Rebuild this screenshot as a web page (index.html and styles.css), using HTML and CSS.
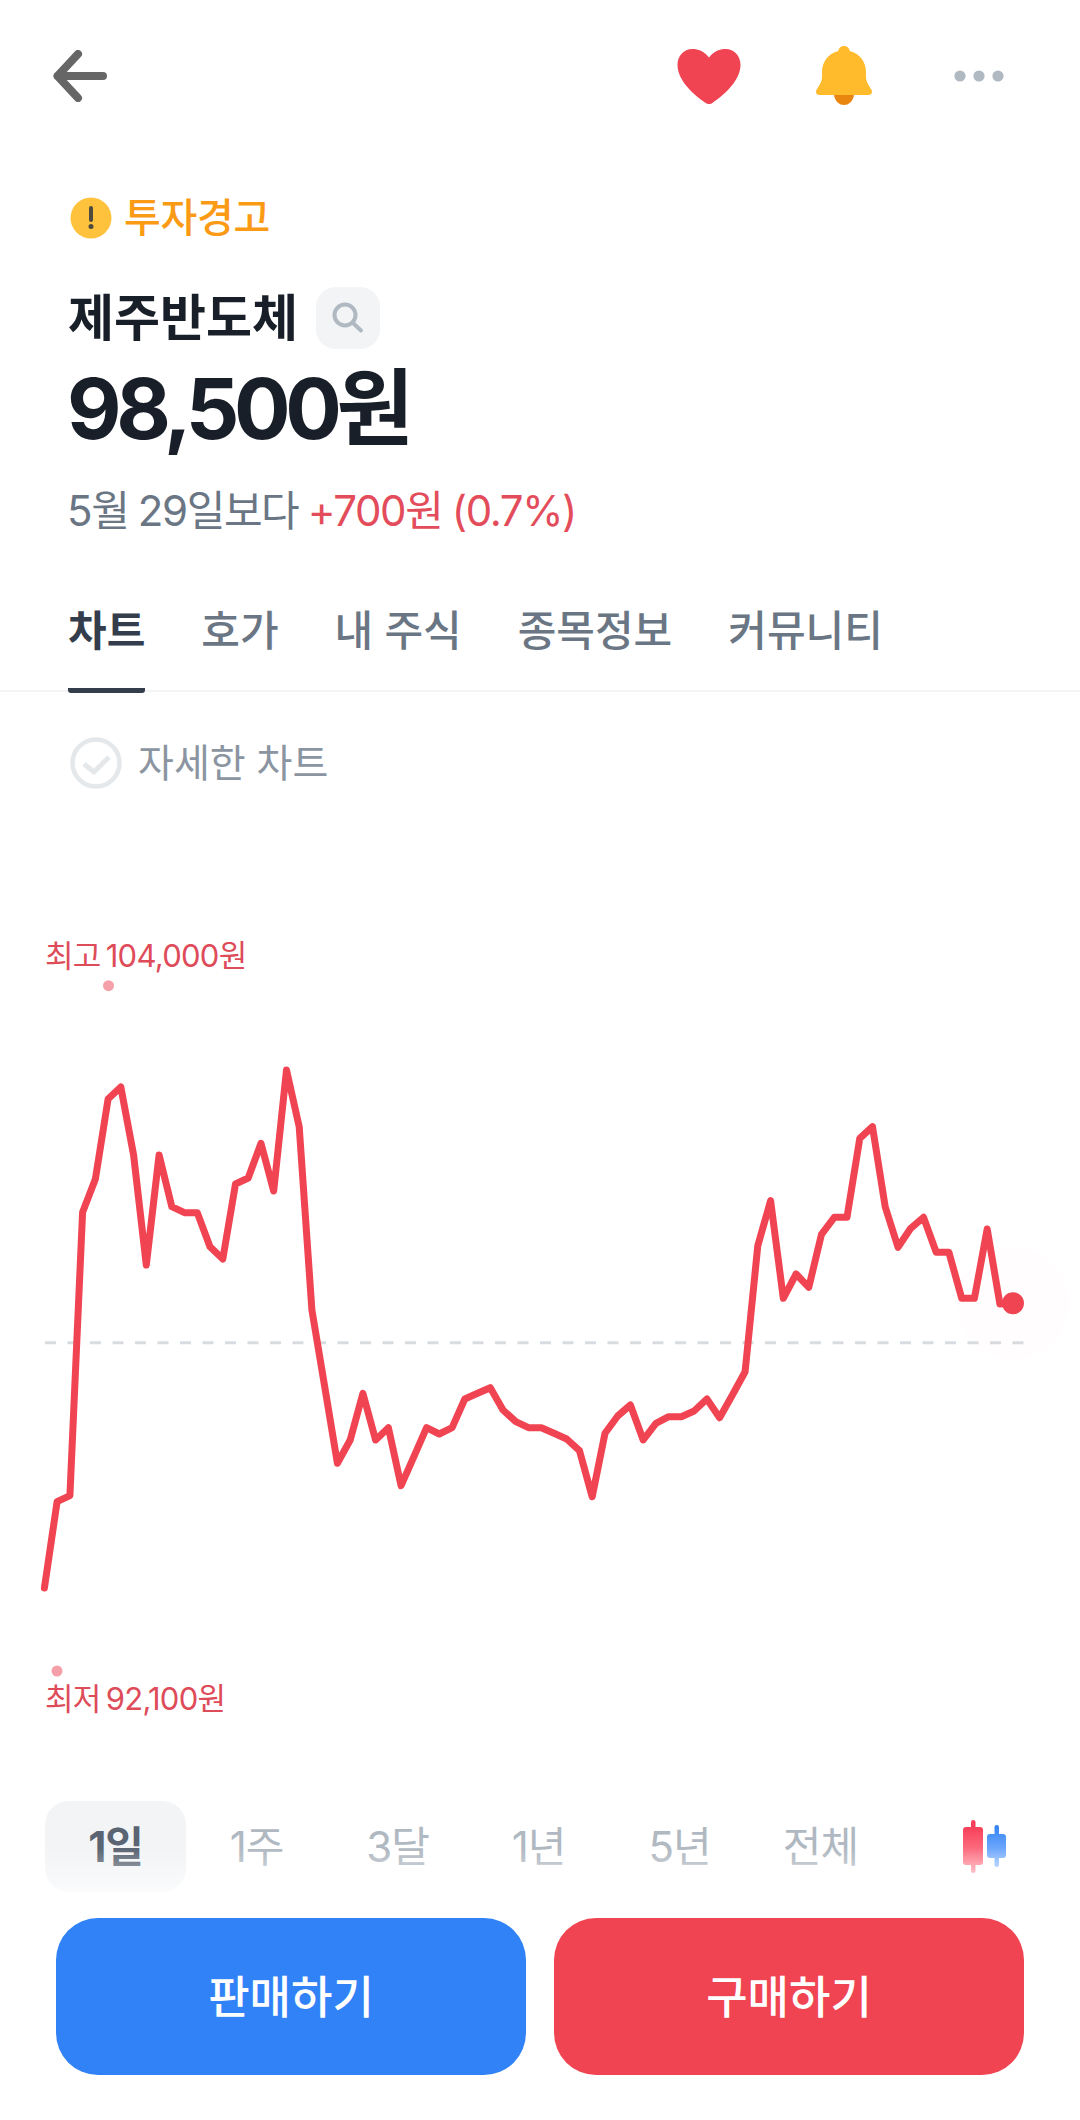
FILE: index.html
```html
<!DOCTYPE html>
<html lang="ko">
<head>
  <meta charset="UTF-8">
  <title>제주반도체</title>
  <link rel="stylesheet" href="styles.css">
</head>
<body>
  <div class="page">
    <header class="topbar">
      <svg class="back" viewBox="0 0 60 52" width="60" height="52">
        <path d="M26 4 L5.500 26 L26 48 M5.500 26 H51" fill="none" stroke="#666" stroke-width="8" stroke-linecap="round" stroke-linejoin="round"/>
      </svg>
      <div class="top-actions">
        <svg viewBox="0 0 64 64" width="64" height="64">
          <path d="M32 13.500C27 7 21 5 15.500 5 6.500 5 .5 12 .5 21c0 17 19.500 32 27.500 37.500 2.500 2 5.500 2 8 0C44 53 63.500 38 63.500 21c0-9-6-16-15-16C43 5 37 7 32 13.500z" fill="#f04452"/>
        </svg>
        <svg viewBox="0 0 64 64" width="64" height="64">
          <path d="M22 50h20c0 6-4.500 11-10 11s-10-5-10-11z" fill="#e8860f"/>
          <path d="M32 2c-3.300 0-5.400 2.200-5.700 5C16.500 9.300 10 18 10 28v5c0 3.500-1.500 6.500-3.500 9.500l-1.800 3C3 48 4.500 51 7.500 51h49c3 0 4.500-3 2.800-5.500l-1.800-3c-2-3-3.500-6-3.500-9.500v-5c0-10-6.500-18.700-16.300-21-.3-2.800-2.400-5-5.700-5z" fill="#ffbb2c"/>
        </svg>
        <svg viewBox="0 0 64 64" width="64" height="64">
          <circle cx="13" cy="32" r="5.600" fill="#b0b8c1"/>
          <circle cx="32" cy="32" r="5.600" fill="#b0b8c1"/>
          <circle cx="51" cy="32" r="5.600" fill="#b0b8c1"/>
        </svg>
      </div>
    </header>

    <section class="summary">
      <div class="warn">
        <svg viewBox="0 0 42 42" width="42" height="42">
          <circle cx="21" cy="21" r="20.500" fill="#ffc23d"/>
          <path d="M21 11v12" stroke="#4e4a3e" stroke-width="4" stroke-linecap="round"/>
          <circle cx="21" cy="29.500" r="2.500" fill="#4e4a3e"/>
        </svg>
        <span>투자경고</span>
      </div>
      <div class="name-row">
        <h1>제주반도체</h1>
        <div class="search-chip">
          <svg viewBox="0 0 64 62" width="64" height="62">
            <circle cx="29" cy="28" r="10.500" fill="none" stroke="#b0b8c1" stroke-width="4"/>
            <path d="M37 36l8 7.500" stroke="#b0b8c1" stroke-width="4" stroke-linecap="round"/>
          </svg>
        </div>
      </div>
      <div class="price">98,500원</div>
      <div class="diff">5월 29일보다 <em>+700원 (0.7%)</em></div>
    </section>

    <nav class="tabs">
      <a class="tab active">차트</a>
      <a class="tab">호가</a>
      <a class="tab">내 주식</a>
      <a class="tab">종목정보</a>
      <a class="tab">커뮤니티</a>
    </nav>

    <div class="detail-toggle">
      <svg viewBox="0 0 52 52" width="52" height="52">
        <circle cx="26" cy="26" r="23.500" fill="none" stroke="#e5e8eb" stroke-width="4.500"/>
        <path d="M14 27l10 8 15-15" fill="none" stroke="#e5e8eb" stroke-width="5" stroke-linejoin="round"/>
      </svg>
      <span>자세한 차트</span>
    </div>

    <div class="chart">
      <span class="chart-label high">최고 104,000원</span>
      <span class="chart-label low">최저 92,100원</span>
      <!-- viewBox uses the y position on the page, chart starts at 800 -->
      <svg viewBox="0 800 1080 1000" width="1080" height="1000">
        <circle cx="1013" cy="1303" r="56" fill="#f04452" opacity="0.012"/>
        <circle cx="108.500" cy="985.700" r="5.500" fill="#f5a0a8"/>
        <circle cx="57" cy="1671" r="5.500" fill="#f5a0a8"/>
        <line x1="45" y1="1342.700" x2="1024" y2="1342.700" stroke="#d1d6db" stroke-width="3" stroke-dasharray="11 11.500" opacity="0.85"/>
        <polyline fill="none" stroke="#f04452" stroke-width="7" stroke-linejoin="round" stroke-linecap="round" points="44.400,1588 57.100,1501.700 69.900,1495.700 82.600,1212.300 95.400,1179 108.100,1099 120.800,1087 133.600,1155 146.300,1265 159.100,1155 171.800,1206.700 184.500,1212.700 197.300,1212.700 210,1246.700 222.800,1259 235.500,1184 248.200,1178 261,1143.300 273.700,1191 286.500,1070 299.200,1126.700 311.900,1310 324.700,1386.700 337.400,1463.300 350.200,1440 362.900,1393.300 375.600,1440 388.400,1427.700 401.100,1485.700 413.900,1456.700 426.600,1427.700 439.300,1434 452.100,1427.700 464.800,1399 477.600,1393.300 490.300,1387.700 503,1410 515.800,1421.700 528.500,1427.700 541.300,1427.700 554,1433.300 566.700,1439 579.500,1450.700 592.200,1496.700 605,1433.300 617.700,1416 630.400,1405 643.200,1440 655.900,1423.300 668.700,1416.700 681.400,1416.700 694.100,1411 706.900,1399 719.600,1417.700 732.400,1395 745.100,1371.700 757.800,1245.700 770.600,1200.700 783.300,1298.300 796.100,1274 808.800,1287.300 821.500,1234.300 834.300,1217.300 847,1217.300 859.800,1138.300 872.500,1126.700 885.200,1206.700 898,1247.300 910.700,1228.300 923.500,1217.300 936.200,1252.300 948.900,1252.300 961.700,1298.300 974.400,1298.300 987.200,1229 999.900,1304 1012.600,1303.300"/>
        <circle cx="1013" cy="1303.300" r="11" fill="#f04452"/>
      </svg>
    </div>

    <div class="range-row">
      <div class="range active">1일</div>
      <div class="range">1주</div>
      <div class="range">3달</div>
      <div class="range">1년</div>
      <div class="range">5년</div>
      <div class="range">전체</div>
      <svg class="candle" viewBox="0 0 44 54" width="44" height="54">
        <defs>
          <linearGradient id="candleRed" gradientUnits="userSpaceOnUse" x1="0" y1="7" x2="0" y2="53">
            <stop offset="0" stop-color="#f8405a"/>
            <stop offset="1" stop-color="#ff9aa6"/>
          </linearGradient>
          <linearGradient id="candleBlue" gradientUnits="userSpaceOnUse" x1="0" y1="5" x2="0" y2="47">
            <stop offset="0" stop-color="#3182f6"/>
            <stop offset="1" stop-color="#9cc4ff"/>
          </linearGradient>
        </defs>
        <rect x="8" y="0" width="4.500" height="53" rx="2.250" fill="url(#candleRed)"/>
        <rect x="0" y="7" width="20" height="38" rx="3" fill="url(#candleRed)"/>
        <rect x="31.500" y="5" width="4.500" height="42" rx="2.250" fill="url(#candleBlue)"/>
        <rect x="24" y="14" width="19" height="24" rx="3" fill="url(#candleBlue)"/>
      </svg>
    </div>

    <div class="actions">
      <button class="btn sell">판매하기</button>
      <button class="btn buy">구매하기</button>
    </div>
  </div>
</body>
</html>
```

FILE: styles.css
```css
* {
  box-sizing: border-box;
}

body {
  margin: 0;
  background: #fff;
  font-family: Inter, "Noto Sans CJK KR", sans-serif;
  color: #191f28;
}

.page {
  width: 1080px;
  height: 2120px;
  overflow: hidden;
}

.topbar {
  display: flex;
  align-items: center;
  justify-content: space-between;
  height: 64px;
  margin-top: 44px;
  padding: 0 69px 0 52px;
}

.top-actions {
  display: flex;
  gap: 71px;
}

.summary {
  padding: 89px 68px 0;
}

.warn {
  display: flex;
  align-items: center;
  gap: 12px;
  height: 41px;
  margin-left: 2px;
  color: #fb9a14;
  font-size: 40px;
  font-weight: 500;
  line-height: 38px;
  letter-spacing: -0.3px;
}

.name-row {
  display: flex;
  align-items: center;
  gap: 18px;
  height: 62px;
  margin-top: 49px;
}

h1 {
  margin: 0;
  font-size: 50px;
  font-weight: 700;
  line-height: 62px;
}

.search-chip {
  width: 64px;
  height: 62px;
  background: #f2f4f6;
  border-radius: 20px;
}

.price {
  margin: 12px 0 0 -1px;
  font-size: 84px;
  font-weight: 700;
  line-height: 96px;
  letter-spacing: -5.4px;
}

.diff {
  margin: 29px 0 0 -1px;
  color: #6b7684;
  font-size: 42px;
  line-height: 50px;
  letter-spacing: -1.4px;
  word-spacing: -1px;
}

.diff em {
  color: #e34c5a;
  font-style: normal;
}

.tabs {
  display: flex;
  gap: 56px;
  height: 91px;
  margin-top: 65px;
  padding: 0 68px;
  border-bottom: 2px solid #f2f4f6;
  color: #6b7684;
  font-size: 42px;
  font-weight: 500;
  line-height: 60px;
}

.tab.active {
  height: 92px;
  border-bottom: 5px solid #333d4b;
  border-radius: 0 0 3px 3px;
  color: #333d4b;
  font-weight: 700;
}

.detail-toggle {
  display: flex;
  align-items: center;
  gap: 16px;
  margin: 45px 0 0 70px;
  color: #8b95a1;
  font-size: 39px;
  line-height: 52px;
}

.chart {
  position: relative;
  width: 1080px;
  height: 1000px;
  margin-top: 11px;
}

.chart svg {
  display: block;
}

.chart-label {
  position: absolute;
  left: 45px;
  color: #de4b59;
  font-size: 31px;
  line-height: 36px;
  letter-spacing: -0.7px;
  word-spacing: -3px;
}

.chart-label.high {
  top: 138px;
}

.chart-label.low {
  top: 881px;
}

.range-row {
  position: relative;
  display: flex;
  align-items: center;
  height: 91px;
  margin-top: 1px;
  padding-left: 45px;
  color: #b0b8c1;
  font-size: 42px;
  letter-spacing: -1px;
}

.range {
  width: 141px;
  text-align: center;
  line-height: 91px;
}

.range.active {
  background: #f2f4f6;
  border-radius: 24px;
  color: #5a6472;
  font-weight: 700;
}

.candle {
  margin-left: 72px;
}

.actions {
  position: relative;
  display: flex;
  gap: 28px;
  margin-top: 26px;
  padding: 0 56px;
}

/* white fade that sits over the bottom of the range row */
.actions::before {
  content: "";
  position: absolute;
  left: 0;
  right: 0;
  top: -70px;
  height: 70px;
  background: linear-gradient(to bottom, rgba(255, 255, 255, 0), #fff);
}

.btn {
  flex: 1;
  height: 157px;
  padding-bottom: 6px;
  border: none;
  border-radius: 42px;
  color: #fff;
  font-family: inherit;
  font-size: 45px;
  font-weight: 500;
}

.sell {
  background: #3182f6;
}

.buy {
  background: #f04452;
}
```
